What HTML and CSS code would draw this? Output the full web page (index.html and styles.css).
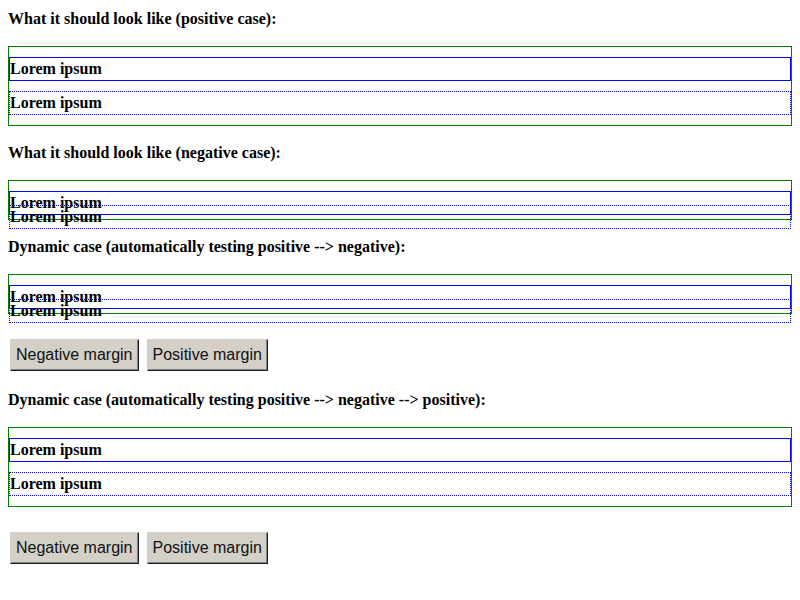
FILE: index.html
```html
<!DOCTYPE html>
<html>
<head>
<meta charset="utf-8">
<title>Negative margin test</title>
<link rel="stylesheet" href="styles.css">
</head>
<body>
<p class="title first">What it should look like (positive case):</p>
<div class="box">
  <div class="solid">Lorem ipsum</div>
  <div class="dotted">Lorem ipsum</div>
</div>
<p class="title">What it should look like (negative case):</p>
<div class="box neg">
  <div class="solid">Lorem ipsum</div>
  <div class="dotted">Lorem ipsum</div>
</div>
<p class="title">Dynamic case (automatically testing positive --&gt; negative):</p>
<div class="box neg">
  <div class="solid">Lorem ipsum</div>
  <div class="dotted">Lorem ipsum</div>
</div>
<div class="controls">
  <button class="btn" type="button">Negative margin</button>
  <button class="btn" type="button">Positive margin</button>
</div>
<p class="title">Dynamic case (automatically testing positive --&gt; negative --&gt; positive):</p>
<div class="box">
  <div class="solid">Lorem ipsum</div>
  <div class="dotted">Lorem ipsum</div>
</div>
<div class="controls">
  <button class="btn" type="button">Negative margin</button>
  <button class="btn" type="button">Positive margin</button>
</div>
</body>
</html>
```

FILE: styles.css
```css
html, body {
  background: #ffffff;
}
body {
  margin: 8px;
  font-family: "Liberation Serif", "Times New Roman", serif;
  font-size: 16px;
  font-weight: bold;
  line-height: 22px;
  color: #000000;
}
.title {
  margin: 16px 0;
}
.title.first {
  margin-top: 0;
}
.box {
  border: 1px solid #008000;
}
.solid {
  border: 1px solid #0000ff;
  margin-top: 10px;
}
.dotted {
  border: 1px dotted #0000ff;
  margin: 10px 0;
}
.neg .dotted {
  margin: -10px 0;
}
.controls {
  display: flex;
  gap: 8px;
  margin: 25px 0 18px;
  padding-left: 2px;
}
.btn {
  font-family: "Liberation Sans", Arial, sans-serif;
  font-size: 16px;
  font-weight: normal;
  color: #111111;
  background: #d4d0c8;
  height: 32px;
  padding: 0 5px;
  margin: 0;
  border: 1px solid;
  border-color: #d4d0c8 #202020 #202020 #d4d0c8;
  box-shadow: inset -1px -1px 0 #808080;
  line-height: 20px;
}
```
